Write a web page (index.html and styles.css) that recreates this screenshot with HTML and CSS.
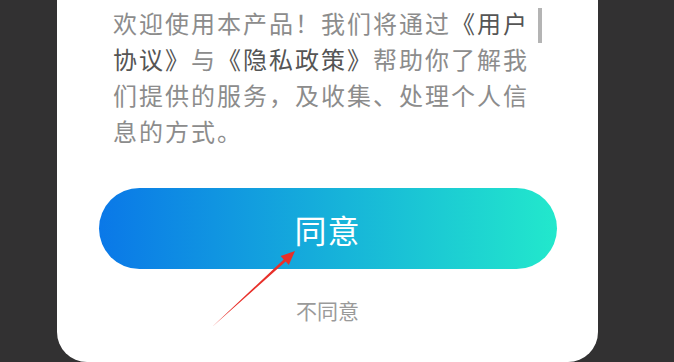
FILE: index.html
```html
<!DOCTYPE html>
<html lang="zh-CN">
<head>
  <meta charset="UTF-8">
  <meta name="viewport" content="width=device-width, initial-scale=1.0">
  <title>用户协议</title>
  <link rel="stylesheet" href="styles.css">
</head>
<body>
  <div class="dialog">
    <div class="content">
      <p class="desc">欢迎使用本产品！我们将通过<span class="link">《用户协议》</span>与<span class="link">《隐私政策》</span>帮助你了解我们提供的服务，及收集、处理个人信息的方式。</p>
      <div class="scrollbar"></div>
    </div>
    <button class="btn_agree">同意</button>
    <div class="btn_refuse">不同意</div>

    <svg class="arrow" width="674" height="362" viewBox="0 0 674 362">
      <polygon fill="#e8302a" points="212,327 283.7,259.4 280.6,256.1 295,251 288.8,264.9 285.7,261.6"/>
    </svg>
  </div>
</body>
</html>
```

FILE: styles.css
```css
*{
  margin: 0;
  padding: 0;
  box-sizing: border-box;
}

html, body{
  height: 100%;
  overflow: hidden;
}

body{
  background: #323132;
  font-family: "Noto Sans CJK SC", "Noto Sans", sans-serif;
}

.dialog{
  position: relative;
  width: 541px;
  height: 362px;
  margin-left: 57px;
  background: #fff;
  border-radius: 0 0 30px 30px;
  padding-top: 5px;
}

.content{
  position: relative;
  margin-left: 56px;
  width: 430px;
}

.desc{
  font-size: 24px;
  line-height: 36px;
  letter-spacing: 2px;
  color: #8c8c8c;
}

.desc .link{
  color: #555;
}

/* 스크롤바 */
.scrollbar{
  position: absolute;
  left: 425px;
  top: 3px;
  width: 4px;
  height: 35px;
  background: #b4b4b4;
}

.btn_agree{
  display: block;
  width: 458px;
  height: 81px;
  margin: 39px auto 0;
  border: none;
  border-radius: 41px;
  background: linear-gradient(to right, #0a78e8, #22e8cc);
  color: #fff;
  font-family: inherit;
  font-size: 32px;
  letter-spacing: 1px;
}

.btn_refuse{
  margin-top: 26px;
  text-align: center;
  font-size: 21px;
  line-height: 30px;
  color: #9a9a9a;
}

.arrow{
  position: absolute;
  left: -57px;
  top: 0;
  pointer-events: none;
}
```
